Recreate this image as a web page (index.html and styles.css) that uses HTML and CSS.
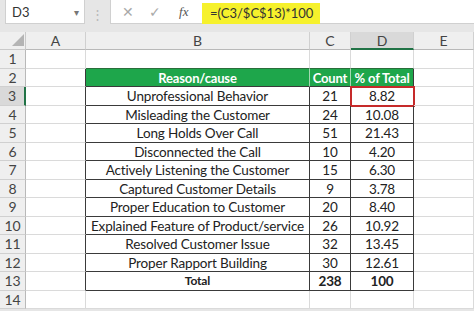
FILE: index.html
```html
<!DOCTYPE html>
<html>
  <head>
    <meta charset="UTF-8" />
    <title>Reason analysis</title>
    <link rel="stylesheet" href="styles.css">
  </head>
  <body>
    <div class="formula-bar">
      <div class="name-box">
        <span>D3</span>
        <span class="caret">&#9662;</span>
      </div>
      <div class="grip">&#8942;</div>
      <div class="fx-buttons">
        <span class="btn-x">&#10005;</span>
        <span class="btn-ok">&#10003;</span>
        <span class="btn-fx"><i>f</i>x</span>
      </div>
      <div class="formula"><span class="hl">=(C3/$C$13)*100</span></div>
    </div>

    <div class="sheet">
      <!-- column headers -->
      <div class="cell corner"><svg width="12" height="12" viewBox="0 0 12 12"><polygon points="12,0 12,12 0,12" fill="#b4b4b4"/></svg></div>
      <div class="cell ch">A</div>
      <div class="cell ch">B</div>
      <div class="cell ch">C</div>
      <div class="cell ch sel-col">D</div>
      <div class="cell ch">E</div>

      <!-- row 1 -->
      <div class="cell rh">1</div>
      <div class="cell"></div>
      <div class="cell above"></div>
      <div class="cell above"></div>
      <div class="cell above"></div>
      <div class="cell"></div>

      <!-- row 2 -->
      <div class="cell rh">2</div>
      <div class="cell edge"></div>
      <div class="cell th">Reason/cause</div>
      <div class="cell th">Count</div>
      <div class="cell th last">% of Total</div>
      <div class="cell"></div>

      <div class="cell rh sel-row">3</div>
      <div class="cell edge"></div>
      <div class="cell t">Unprofessional Behavior</div>
      <div class="cell t">21</div>
      <div class="cell t active">8.82</div>
      <div class="cell"></div>

      <div class="cell rh">4</div>
      <div class="cell edge"></div>
      <div class="cell t">Misleading the Customer</div>
      <div class="cell t">24</div>
      <div class="cell t">10.08</div>
      <div class="cell"></div>

      <div class="cell rh">5</div>
      <div class="cell edge"></div>
      <div class="cell t">Long Holds Over Call</div>
      <div class="cell t">51</div>
      <div class="cell t">21.43</div>
      <div class="cell"></div>

      <div class="cell rh">6</div>
      <div class="cell edge"></div>
      <div class="cell t">Disconnected the Call</div>
      <div class="cell t">10</div>
      <div class="cell t">4.20</div>
      <div class="cell"></div>

      <div class="cell rh">7</div>
      <div class="cell edge"></div>
      <div class="cell t">Actively Listening the Customer</div>
      <div class="cell t">15</div>
      <div class="cell t">6.30</div>
      <div class="cell"></div>

      <div class="cell rh">8</div>
      <div class="cell edge"></div>
      <div class="cell t">Captured Customer Details</div>
      <div class="cell t">9</div>
      <div class="cell t">3.78</div>
      <div class="cell"></div>

      <div class="cell rh">9</div>
      <div class="cell edge"></div>
      <div class="cell t">Proper Education to Customer</div>
      <div class="cell t">20</div>
      <div class="cell t">8.40</div>
      <div class="cell"></div>

      <div class="cell rh">10</div>
      <div class="cell edge"></div>
      <div class="cell t">Explained Feature of Product/service</div>
      <div class="cell t">26</div>
      <div class="cell t">10.92</div>
      <div class="cell"></div>

      <div class="cell rh">11</div>
      <div class="cell edge"></div>
      <div class="cell t">Resolved Customer Issue</div>
      <div class="cell t">32</div>
      <div class="cell t">13.45</div>
      <div class="cell"></div>

      <div class="cell rh">12</div>
      <div class="cell edge"></div>
      <div class="cell t">Proper Rapport Building</div>
      <div class="cell t">30</div>
      <div class="cell t">12.61</div>
      <div class="cell"></div>

      <div class="cell rh">13</div>
      <div class="cell edge"></div>
      <div class="cell t total small">Total</div>
      <div class="cell t total">238</div>
      <div class="cell t total">100</div>
      <div class="cell"></div>

      <div class="cell rh">14</div>
      <div class="cell"></div>
      <div class="cell"></div>
      <div class="cell"></div>
      <div class="cell"></div>
      <div class="cell"></div>
    </div>
  </body>
</html>
```

FILE: styles.css
```css
* {
  box-sizing: border-box;
}

body {
  margin: 0;
  background-color: #e6e6e6;
  font-family: Lato, "Open Sans", sans-serif;
  color: #222;
  overflow: hidden;
}

/* formula bar */

.formula-bar {
  display: flex;
  align-items: stretch;
  height: 24px;
  margin-bottom: 8px;
}

.name-box {
  width: 80px;
  margin-left: 5px;
  background: #fff;
  border: 1px solid #d0d0d0;
  border-top: none;
  display: flex;
  align-items: center;
  justify-content: space-between;
  padding: 0 5px 0 6px;
  font-size: 13px;
  color: #333;
}

.caret {
  font-size: 10px;
  color: #777;
}

.grip {
  width: 25px;
  text-align: center;
  line-height: 28px;
  font-size: 13px;
  color: #b8b8b8;
}

.fx-buttons {
  width: 90px;
  background: #fff;
  border: 1px solid #d0d0d0;
  border-top: none;
  border-right: none;
  display: flex;
  align-items: center;
  padding-left: 11px;
  gap: 15px;
  font-size: 14px;
  color: #a9a9a9;
}

.btn-fx {
  color: #555;
  font-family: "Liberation Serif", serif;
  font-style: italic;
  font-size: 13px;
  margin-left: 3px;
}

.formula {
  flex: 1;
  background: #fff;
  border-bottom: 1px solid #d0d0d0;
  padding: 3px 0 0 2px;
  font-size: 13px;
}

.hl {
  display: inline-block;
  height: 21px;
  line-height: 21px;
  padding: 0 7px 0 8px;
  background: #f6f12c;
  color: #333;
}

/* grid */

.sheet {
  display: grid;
  grid-template-columns: 26px 60px 224px 41px 63px 1fr;
  grid-template-rows: 18px;
  grid-auto-rows: 18.5px;
  background: #fff;
}

.cell {
  border-right: 1px solid #dadada;
  border-bottom: 1px solid #dadada;
  font-size: 13.5px;
  letter-spacing: -0.15px;
  line-height: 18px;
  text-align: center;
  white-space: nowrap;
  overflow: hidden;
}

.corner {
  background: #efefef;
  border-color: #c9c9c9;
  display: flex;
  align-items: flex-end;
  justify-content: flex-end;
  padding: 0 1px 3px 0;
}

.ch {
  background: #efefef;
  border-right-color: #d0d0d0;
  border-bottom-color: #b9b9b9;
  color: #444;
  font-size: 14px;
  letter-spacing: 0;
}

.rh {
  background: #efefef;
  border-right-color: #b9b9b9;
  border-bottom-color: #d0d0d0;
  color: #444;
  font-size: 14px;
  letter-spacing: 0;
}

.sel-col {
  background: #d9d9d9;
  border-bottom: 2px solid #217346;
}

.sel-row {
  background: #d9d9d9;
  border-right: 2px solid #217346;
}

.above {
  border-bottom-color: #2a6e3a;
}

.edge {
  border-right-color: #3a3a3a;
}

.th {
  background: #1ea64b;
  color: #fff;
  font-weight: bold;
  font-size: 13px;
  border-right-color: #a5d8b2;
  border-bottom-color: #3a3a3a;
}

.th.last {
  border-right-color: #3a3a3a;
}

.t {
  border-right-color: #3a3a3a;
  border-bottom-color: #3a3a3a;
}

.active {
  outline: 2px solid #c62a2a;
  outline-offset: -1px;
}

.total {
  font-weight: bold;
}

.small {
  font-size: 12px;
}
```
